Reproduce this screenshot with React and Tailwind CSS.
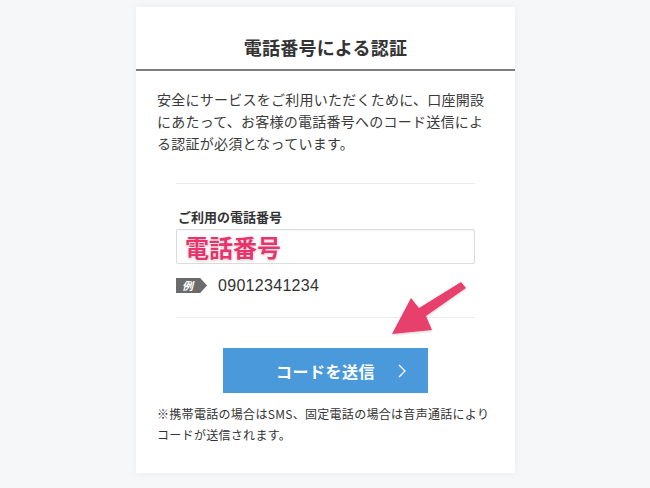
export default function App() {
  const jp = { fontFamily: '"Noto Sans CJK JP", "Noto Sans", sans-serif' }

  return (
    <div className="relative h-[488px] w-[650px] overflow-hidden bg-[#f6f7f9] pt-[7px]" style={jp}>
      <div className="mx-auto ml-[136px] w-[379px] bg-white pb-[28px] shadow-[0_0_6px_rgba(0,0,0,0.06)]">
        <div className="px-5 pb-[10px] pt-[28px] text-center">
          <h1 className="text-[18px] font-bold leading-[24px] tracking-[0.2px] text-[#333]">
            電話番号による認証
          </h1>
        </div>
        <div className="h-[2px] bg-[#7d7d7d]" />

        <p className="px-[21px] pt-[17px] text-[14px] leading-[22px] tracking-[0.25px] text-[#3a3a3a]">
          安全にサービスをご利用いただくために、口座開設にあたって、お客様の電話番号へのコード送信による認証が必須となっています。
        </p>

        <div className="mx-[40px] mt-[29px] border-t border-[#ececec] pt-[24px]">
          <label className="block pl-[2px] text-[13px] font-bold leading-[18px] text-[#333]">
            ご利用の電話番号
          </label>
          <div className="mt-[3px] flex h-[35px] items-center rounded-[2px] border border-[#dcdcdc] bg-white px-[8px] shadow-[inset_0_1px_2px_rgba(0,0,0,0.04)]">
            <span className="text-[24px] font-bold leading-[30px] text-[#e8336c] [text-shadow:0_0_2px_#fff,0_1px_3px_rgba(0,0,0,0.25)]">
              電話番号
            </span>
          </div>
          <div className="mt-[13px] flex items-center gap-[11px]">
            <span className="flex h-[15px] w-[31px] items-center bg-[#6b6b6b] pl-[6px] text-[11px] font-bold italic leading-none text-white [clip-path:polygon(0_0,78%_0,100%_50%,78%_100%,0_100%)]">
              例
            </span>
            <span
              className="text-[16px] leading-[17px] tracking-[0.3px] text-[#333]"
              style={{ fontFamily: '"Liberation Sans", Arial, sans-serif' }}
            >
              09012341234
            </span>
          </div>
          <div className="mt-[23px] border-t border-[#ececec]" />
        </div>

        <div className="mt-[30px] flex justify-center">
          <button className="relative flex h-[45px] w-[205px] items-center justify-center bg-[#4a99da] text-white">
            <span className="text-[16px] font-bold tracking-[0.5px]">コードを送信</span>
            <svg className="absolute right-[22px] top-[16px]" width="8" height="14" viewBox="0 0 8 14" fill="none">
              <polyline points="1,1 7,7 1,13" stroke="#fff" strokeWidth="1.3" />
            </svg>
          </button>
        </div>

        <p className="mt-[10px] px-[21px] text-[12px] leading-[21px] tracking-[0.3px] text-[#333]">
          ※携帯電話の場合はSMS、固定電話の場合は音声通話により
          <br />
          コードが送信されます。
        </p>
      </div>

      {/* annotation arrow */}
      <svg className="pointer-events-none absolute left-[386px] top-[278px]" width="84" height="62" viewBox="386 278 84 62">
        <defs>
          <filter id="sh" x="-20%" y="-20%" width="140%" height="140%">
            <feDropShadow dx="0" dy="1" stdDeviation="1" floodColor="#000" floodOpacity="0.2" />
          </filter>
        </defs>
        <polygon
          filter="url(#sh)"
          fill="#e8406c"
          points="461,282 466,288 426,316 432,330 392,334 411,298 419,308"
        />
      </svg>
    </div>
  )
}
